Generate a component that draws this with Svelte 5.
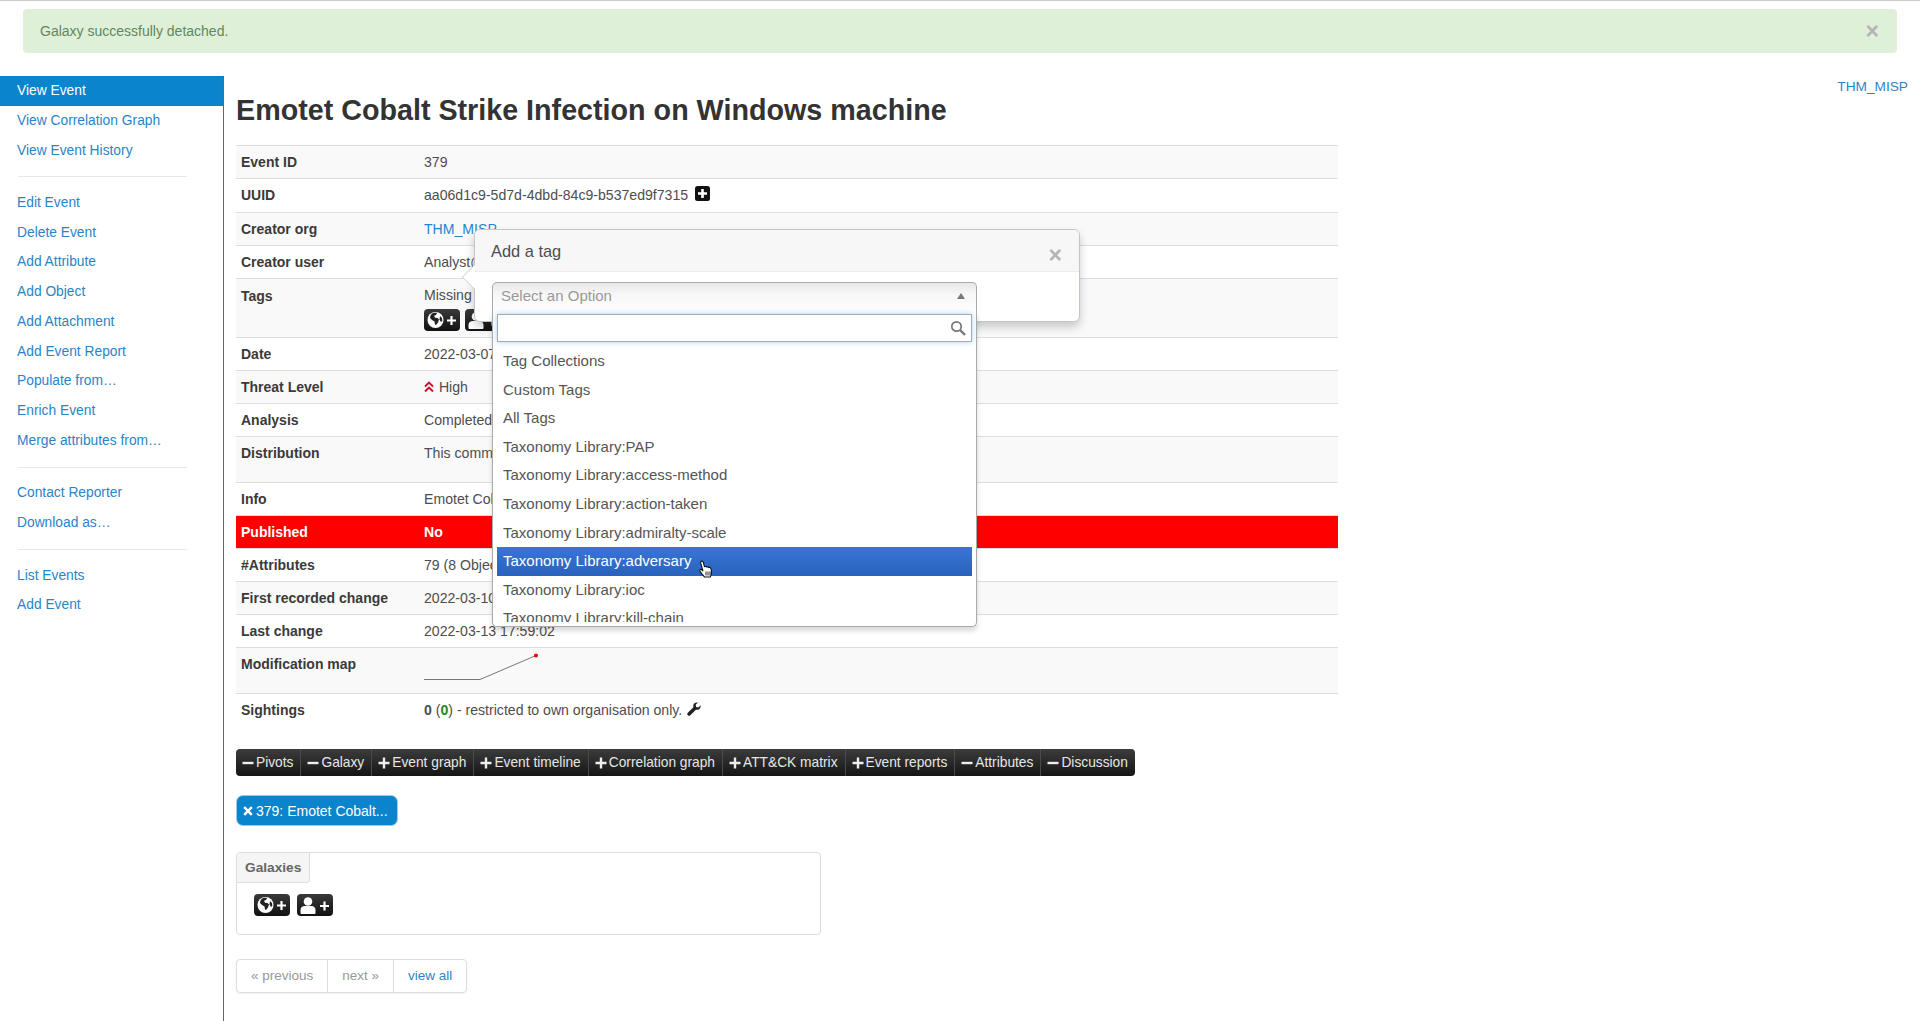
<script>
  const sideGroups = [
    ["View Event", "View Correlation Graph", "View Event History"],
    ["Edit Event", "Delete Event", "Add Attribute", "Add Object", "Add Attachment", "Add Event Report", "Populate from…", "Enrich Event", "Merge attributes from…"],
    ["Contact Reporter", "Download as…"],
    ["List Events", "Add Event"],
  ];

  const pills = [
    ["minus", "Pivots"],
    ["minus", "Galaxy"],
    ["plus", "Event graph"],
    ["plus", "Event timeline"],
    ["plus", "Correlation graph"],
    ["plus", "ATT&CK matrix"],
    ["plus", "Event reports"],
    ["minus", "Attributes"],
    ["minus", "Discussion"],
  ];

  const options = [
    "Tag Collections",
    "Custom Tags",
    "All Tags",
    "Taxonomy Library:PAP",
    "Taxonomy Library:access-method",
    "Taxonomy Library:action-taken",
    "Taxonomy Library:admiralty-scale",
    "Taxonomy Library:adversary",
    "Taxonomy Library:ioc",
    "Taxonomy Library:kill-chain",
  ];
</script>

{#snippet globeBtn()}
  <span class="icon-btn">
    <svg viewBox="0 0 36 22" width="36" height="22">
      <circle cx="11.500" cy="11" r="8" fill="#fff" />
      <path d="M8 4.500c2-1 4-1 5-.4l-1 2-2 .6 1 2 2.500.4 1.500 1.500-1 3-2 2.500-1-.5-.5-3-2.500-1.500L6 9l.5-2.500z" fill="#222" />
      <path d="M16 7l2 2 .3 3-1.300 1-1.500-2.500z" fill="#222" />
      <path d="M27.500 7v9M23 11.500h9" stroke="#fff" stroke-width="2.200" />
    </svg>
  </span>
{/snippet}

{#snippet userBtn()}
  <span class="icon-btn">
    <svg viewBox="0 0 36 22" width="36" height="22">
      <circle cx="11" cy="7.500" r="4.300" fill="#fff" />
      <path d="M3.500 19v-3c0-2.500 2-4 4-4h7c2 0 4 1.500 4 4v3c0 .5-.5 1-1 1h-13c-.5 0-1-.5-1-1z" fill="#fff" />
      <path d="M27.500 7.500v9M23 12h9" stroke="#fff" stroke-width="2.200" />
    </svg>
  </span>
{/snippet}

<div class="page">
  <div class="alert">
    <span>Galaxy successfully detached.</span>
    <span class="close alert-close">×</span>
  </div>

  <div class="main">
    <nav class="side">
      {#each sideGroups as group, g}
        {#if g > 0}<div class="divider"></div>{/if}
        {#each group as item}
          <div class="side-item" class:active={item === "View Event"}>{item}</div>
        {/each}
      {/each}
    </nav>

    <div class="content">
      <div class="event">
        <h2>Emotet Cobalt Strike Infection on Windows machine</h2>

        <table>
          <tbody>
            <tr><th>Event ID</th><td>379</td></tr>
            <tr class="uuid-row">
              <th>UUID</th>
              <td>
                <span class="uuid">aa06d1c9-5d7d-4dbd-84c9-b537ed9f7315</span>
                <svg class="uuid-plus" viewBox="0 0 15 15" width="15" height="15">
                  <rect width="15" height="15" rx="2.500" fill="#111" />
                  <path d="M7.500 3v9M3 7.500h9" stroke="#fff" stroke-width="2.600" />
                </svg>
              </td>
            </tr>
            <tr><th>Creator org</th><td><span class="link">THM_MISP</span></td></tr>
            <tr><th>Creator user</th><td>Analyst@thm.misp</td></tr>
            <tr class="tags-row">
              <th>Tags</th>
              <td>
                <div>Missing</div>
                <div class="tag-btns">
                  {@render globeBtn()}
                  {@render userBtn()}
                </div>
              </td>
            </tr>
            <tr><th>Date</th><td>2022-03-07</td></tr>
            <tr>
              <th>Threat Level</th>
              <td>
                <svg class="threat" viewBox="0 0 10 12" width="10" height="12">
                  <path d="M1 5.500l4-4 4 4M1 10.500l4-4 4 4" fill="none" stroke="#c8102e" stroke-width="1.800" />
                </svg>
                High
              </td>
            </tr>
            <tr><th>Analysis</th><td>Completed</td></tr>
            <tr class="tall"><th>Distribution</th><td>This community only</td></tr>
            <tr><th>Info</th><td>Emotet Cobalt Strike Infection on Windows machine</td></tr>
            <tr class="published"><th>Published</th><td>No</td></tr>
            <tr><th>#Attributes</th><td>79 (8 Objects)</td></tr>
            <tr><th>First recorded change</th><td>2022-03-10 11:24:51</td></tr>
            <tr><th>Last change</th><td>2022-03-13 17:59:02</td></tr>
            <tr class="tall">
              <th>Modification map</th>
              <td class="spark-cell">
                <svg class="spark" viewBox="0 0 116 30" width="116" height="30">
                  <path d="M0 26.500H56L112 2.500" fill="none" stroke="#777" stroke-width="1" />
                  <circle cx="112" cy="2.500" r="2" fill="#e00" />
                </svg>
              </td>
            </tr>
            <tr>
              <th>Sightings</th>
              <td>
                <b>0</b> (<b class="green">0</b>) - restricted to own organisation only.
                <svg class="wrench" viewBox="0 0 14 14" width="14" height="14">
                  <path d="M13.500 3.200c.300 1.400-.1 2.800-1.100 3.700-1 .9-2.300 1.200-3.500.8L3.300 13.300c-.7.700-1.800.7-2.500 0-.7-.7-.7-1.800 0-2.500l5.600-5.600C6 4 6.300 2.600 7.200 1.600 8.200.6 9.500.2 10.900.5L8.700 2.700l.4 2.300 2.300.4z" fill="#222" />
                </svg>
              </td>
            </tr>
          </tbody>
        </table>

        <div class="pills">
          {#each pills as [kind, label]}
            <div class="pill">
              <svg viewBox="0 0 12 12" width="12" height="12">
                {#if kind === "plus"}
                  <path d="M6 .5v11M.5 6h11" stroke="#eee" stroke-width="2.400" />
                {:else}
                  <path d="M.5 6h11" stroke="#eee" stroke-width="2.400" />
                {/if}
              </svg>
              <span>{label}</span>
            </div>
          {/each}
        </div>

        <div class="event-btn">
          <svg viewBox="0 0 10 10" width="10" height="10">
            <path d="M1.200 1.200l7.600 7.600M8.800 1.200L1.200 8.800" stroke="#fff" stroke-width="2.500" />
          </svg>
          <span>379: Emotet Cobalt...</span>
        </div>

        <div class="galaxies">
          <div class="galaxies-tab">Galaxies</div>
          <div class="galaxies-btns">
            {@render globeBtn()}
            {@render userBtn()}
          </div>
        </div>

        <div class="pager">
          <span class="off">« previous</span>
          <span class="off">next »</span>
          <span class="link">view all</span>
        </div>

        <!-- add tag popover, sits on top of the table -->
        <div class="popover">
          <div class="popover-title">
            <span>Add a tag</span>
            <span class="close pop-close">×</span>
          </div>
          <div class="popover-body">
            <div class="chosen">
              <div class="chosen-head">
                <span>Select an Option</span>
                <i class="caret"></i>
              </div>
              <div class="drop">
                <div class="search">
                  <svg viewBox="0 0 16 16" width="16" height="16">
                    <circle cx="6.500" cy="6.500" r="4.700" fill="none" stroke="#777" stroke-width="1.700" />
                    <path d="M10 10l5 5" stroke="#777" stroke-width="2.400" />
                  </svg>
                </div>
                <ul>
                  {#each options as opt}
                    <li class:hl={opt.endsWith("adversary")}>{opt}</li>
                  {/each}
                </ul>
                <svg class="hand" viewBox="0 0 18 20" width="18" height="20">
                  <path d="M4 1.500c1-.8 2.200 0 2.400 1l1 4.200 1.100-.2c.7-.1 1.200.2 1.500.6.600-.3 1.400-.2 1.800.4.600-.3 1.400-.1 1.800.5.600.8 1 3 .9 5-.1 1.600-.6 3-1.200 4H7.500c-.8-1-2.200-2.600-4.300-5.400-.6-.8-.5-1.600 0-2 .6-.4 1.400-.2 2 .5l.8 1L3.800 3.400c-.2-.8-.1-1.500.2-1.900z" fill="#fff" stroke="#111" stroke-width="1.100" />
                  <path d="M9 11.500v4M11 11.500v4M13 11.500v4" stroke="#111" stroke-width=".9" />
                </svg>
              </div>
            </div>
          </div>
        </div>
      </div>

      <span class="link org">THM_MISP</span>
    </div>
  </div>
</div>

<style>
  :global(body) {
    margin: 0;
    background: #fff;
    font-family: "Liberation Sans", Arial, sans-serif;
    font-size: 14px;
    line-height: 20px;
    color: #4d4d4d;
  }
  .page {
    border-top: 1px solid #ccc;
    height: 1020px;
    overflow: hidden;
  }
  .link {
    color: #2a84c8;
  }
  .close {
    font-weight: bold;
    font-size: 23px;
    color: #b4b4b4;
    line-height: 20px;
  }

  .alert {
    display: flex;
    justify-content: space-between;
    align-items: center;
    box-sizing: border-box;
    height: 44px;
    margin: 8px 23px 23px;
    padding: 0 18px 0 17px;
    background: #dff0d8;
    border-radius: 4px;
    color: #5f8760;
  }

  .main {
    display: flex;
    min-height: 945px;
  }
  .side {
    width: 223px;
    flex: none;
    border-right: 1px solid #666;
    font-size: 13.800px;
  }
  .side-item {
    height: 29.760px;
    line-height: 29.760px;
    padding-left: 17px;
    color: #2a84c8;
  }
  .side-item.active {
    background: #0a84cc;
    color: #fff;
  }
  .divider {
    height: 1px;
    margin: 11px 36px 10.700px 18px;
    background: #e8e8e8;
  }

  .content {
    flex: 1;
    display: flex;
    justify-content: space-between;
    padding: 0 12px;
  }
  .org {
    margin-top: 1px;
    font-size: 13.700px;
  }
  .event {
    position: relative;
    width: 1102px;
  }

  h2 {
    margin: 14px 0 15px;
    font-size: 28.700px;
    line-height: 40px;
    font-weight: bold;
    color: #333;
  }

  table {
    width: 100%;
    border-collapse: collapse;
    font-size: 14.100px;
  }
  tr {
    border-top: 1px solid #ddd;
  }
  tr:nth-child(odd) {
    background: #f9f9f9;
  }
  th,
  td {
    height: 32px;
    box-sizing: border-box;
    padding: 6px 5px;
    text-align: left;
    vertical-align: top;
  }
  th {
    width: 183px;
    color: #3a3a3a;
    font-weight: bold;
    font-size: 14px;
  }
  tr.uuid-row th,
  tr.uuid-row td {
    height: 34px;
  }
  tr.tall th,
  tr.tall td {
    height: 46px;
  }
  .spark-cell {
    position: relative;
    padding-top: 0;
    padding-bottom: 0;
  }
  .spark {
    display: block;
    margin-top: 5px;
  }
  tr.tags-row th,
  tr.tags-row td {
    height: 59px;
    padding-bottom: 0;
  }
  tr.tags-row th {
    padding-top: 7px;
  }
  tr.published {
    background: #f00;
  }
  tr.published th,
  tr.published td {
    color: #fff;
    font-weight: bold;
  }
  .tag-btns {
    display: flex;
    gap: 5px;
    margin-top: 4px;
  }
  .uuid-plus {
    vertical-align: -1px;
    margin-left: 3px;
  }
  .threat {
    vertical-align: -1px;
    margin-right: 1px;
  }
  .green {
    color: #1e8a1e;
  }
  .wrench {
    vertical-align: -1px;
    margin-left: 1px;
  }

  .icon-btn {
    display: block;
    width: 36px;
    height: 22px;
    border-radius: 4px;
    background: linear-gradient(#3a3a3a, #111);
  }
  .icon-btn svg {
    display: block;
  }

  .pills {
    display: inline-flex;
    margin-top: 23px;
    height: 27px;
    border-radius: 4px;
    background: linear-gradient(#3c3c3c, #151515);
    vertical-align: top;
    font-size: 13.750px;
  }
  .pill {
    display: flex;
    align-items: center;
    gap: 2px;
    padding: 0 7px 0 6px;
    color: #e6e6e6;
    border-left: 1px solid #4a4a4a;
  }
  .pill:first-child {
    border-left: 0;
  }

  .event-btn {
    display: flex;
    align-items: center;
    gap: 3px;
    box-sizing: border-box;
    width: 162px;
    height: 31px;
    margin-top: 19px;
    padding-left: 6px;
    background: #0a84cc;
    border: 1px solid #9cc9e6;
    border-radius: 7px;
    color: #fff;
  }

  .galaxies {
    box-sizing: border-box;
    width: 585px;
    height: 83px;
    margin-top: 26px;
    border: 1px solid #ddd;
    border-radius: 4px;
  }
  .galaxies-tab {
    box-sizing: border-box;
    width: 73px;
    height: 30px;
    line-height: 29px;
    padding-left: 8px;
    background: #f5f5f5;
    border-right: 1px solid #ddd;
    border-bottom: 1px solid #ddd;
    border-radius: 4px 0 4px 0;
    color: #666;
    font-weight: bold;
    font-size: 13.700px;
  }
  .galaxies-btns {
    display: flex;
    gap: 7px;
    margin: 11px 0 0 17px;
  }

  .pager {
    display: inline-flex;
    margin-top: 24px;
    height: 34px;
    line-height: 32px;
    box-sizing: border-box;
    border: 1px solid #ddd;
    border-radius: 4px;
    box-shadow: 0 1px 2px rgba(0, 0, 0, 0.05);
    font-size: 13.500px;
  }
  .pager span {
    padding: 0 14px;
    border-left: 1px solid #ddd;
  }
  .pager span:first-child {
    border-left: 0;
  }
  .off {
    color: #999;
  }

  .popover {
    position: absolute;
    left: 238px;
    top: 153px;
    box-sizing: border-box;
    width: 606px;
    height: 93px;
    background: #fff;
    border: 1px solid #c4c4cc;
    border-radius: 6px;
    box-shadow: 0 5px 10px rgba(0, 0, 0, 0.2);
  }
  .popover::before,
  .popover::after {
    content: "";
    position: absolute;
    top: 35px;
    width: 0;
    height: 0;
    border-style: solid;
    border-width: 12px 12px 12px 0;
    border-color: transparent;
  }
  .popover::before {
    left: -13px;
    border-right-color: #c8c8c8;
  }
  .popover::after {
    left: -12px;
    border-right-color: #fff;
  }
  .popover-title {
    display: flex;
    justify-content: space-between;
    align-items: center;
    box-sizing: border-box;
    height: 42px;
    padding: 0 17px 0 16px;
    background: #f7f7f7;
    border-bottom: 1px solid #ebebeb;
    border-radius: 5px 5px 0 0;
    font-size: 16.400px;
    color: #4d4d4d;
  }
  .pop-close {
    margin-top: 9px;
  }
  .popover-body {
    padding: 10px 103px 0 17px;
    font-size: 15px;
  }

  .chosen {
    position: relative;
    box-sizing: border-box;
    width: 485px;
  }
  .chosen-head {
    display: flex;
    justify-content: space-between;
    align-items: center;
    box-sizing: border-box;
    height: 30px;
    padding: 0 11px 4px 8px;
    background: linear-gradient(#e8e8e8, #f7f7f7 40%, #fff);
    border: 1px solid #aaa;
    border-bottom: 0;
    border-radius: 5px 5px 0 0;
    color: #999;
  }
  .caret {
    width: 0;
    height: 0;
    border-style: solid;
    border-width: 0 4px 6px;
    border-color: transparent transparent #777;
  }
  .drop {
    position: absolute;
    left: 0;
    right: 0;
    top: 30px;
    box-sizing: border-box;
    height: 315px;
    padding: 2px 4px 0;
    background: #fff;
    border: 1px solid #aaa;
    border-top: 0;
    border-radius: 0 0 5px 5px;
    box-shadow: 0 4px 5px rgba(0, 0, 0, 0.15);
  }
  .search {
    display: flex;
    justify-content: flex-end;
    align-items: center;
    box-sizing: border-box;
    height: 28px;
    padding-right: 5px;
    border: 1px solid #aaa;
    box-shadow: 0 0 6px rgba(82, 168, 236, 0.5);
  }
  ul {
    list-style: none;
    margin: 5px 0 0;
    padding: 0;
    height: 275px;
    overflow: hidden;
  }
  li {
    height: 28.600px;
    line-height: 28.600px;
    padding-left: 6px;
    color: #555;
  }
  li.hl {
    background: linear-gradient(#3875d7, #2a62bc);
    color: #fff;
  }
  .hand {
    position: absolute;
    left: 204px;
    top: 248px;
  }
</style>
